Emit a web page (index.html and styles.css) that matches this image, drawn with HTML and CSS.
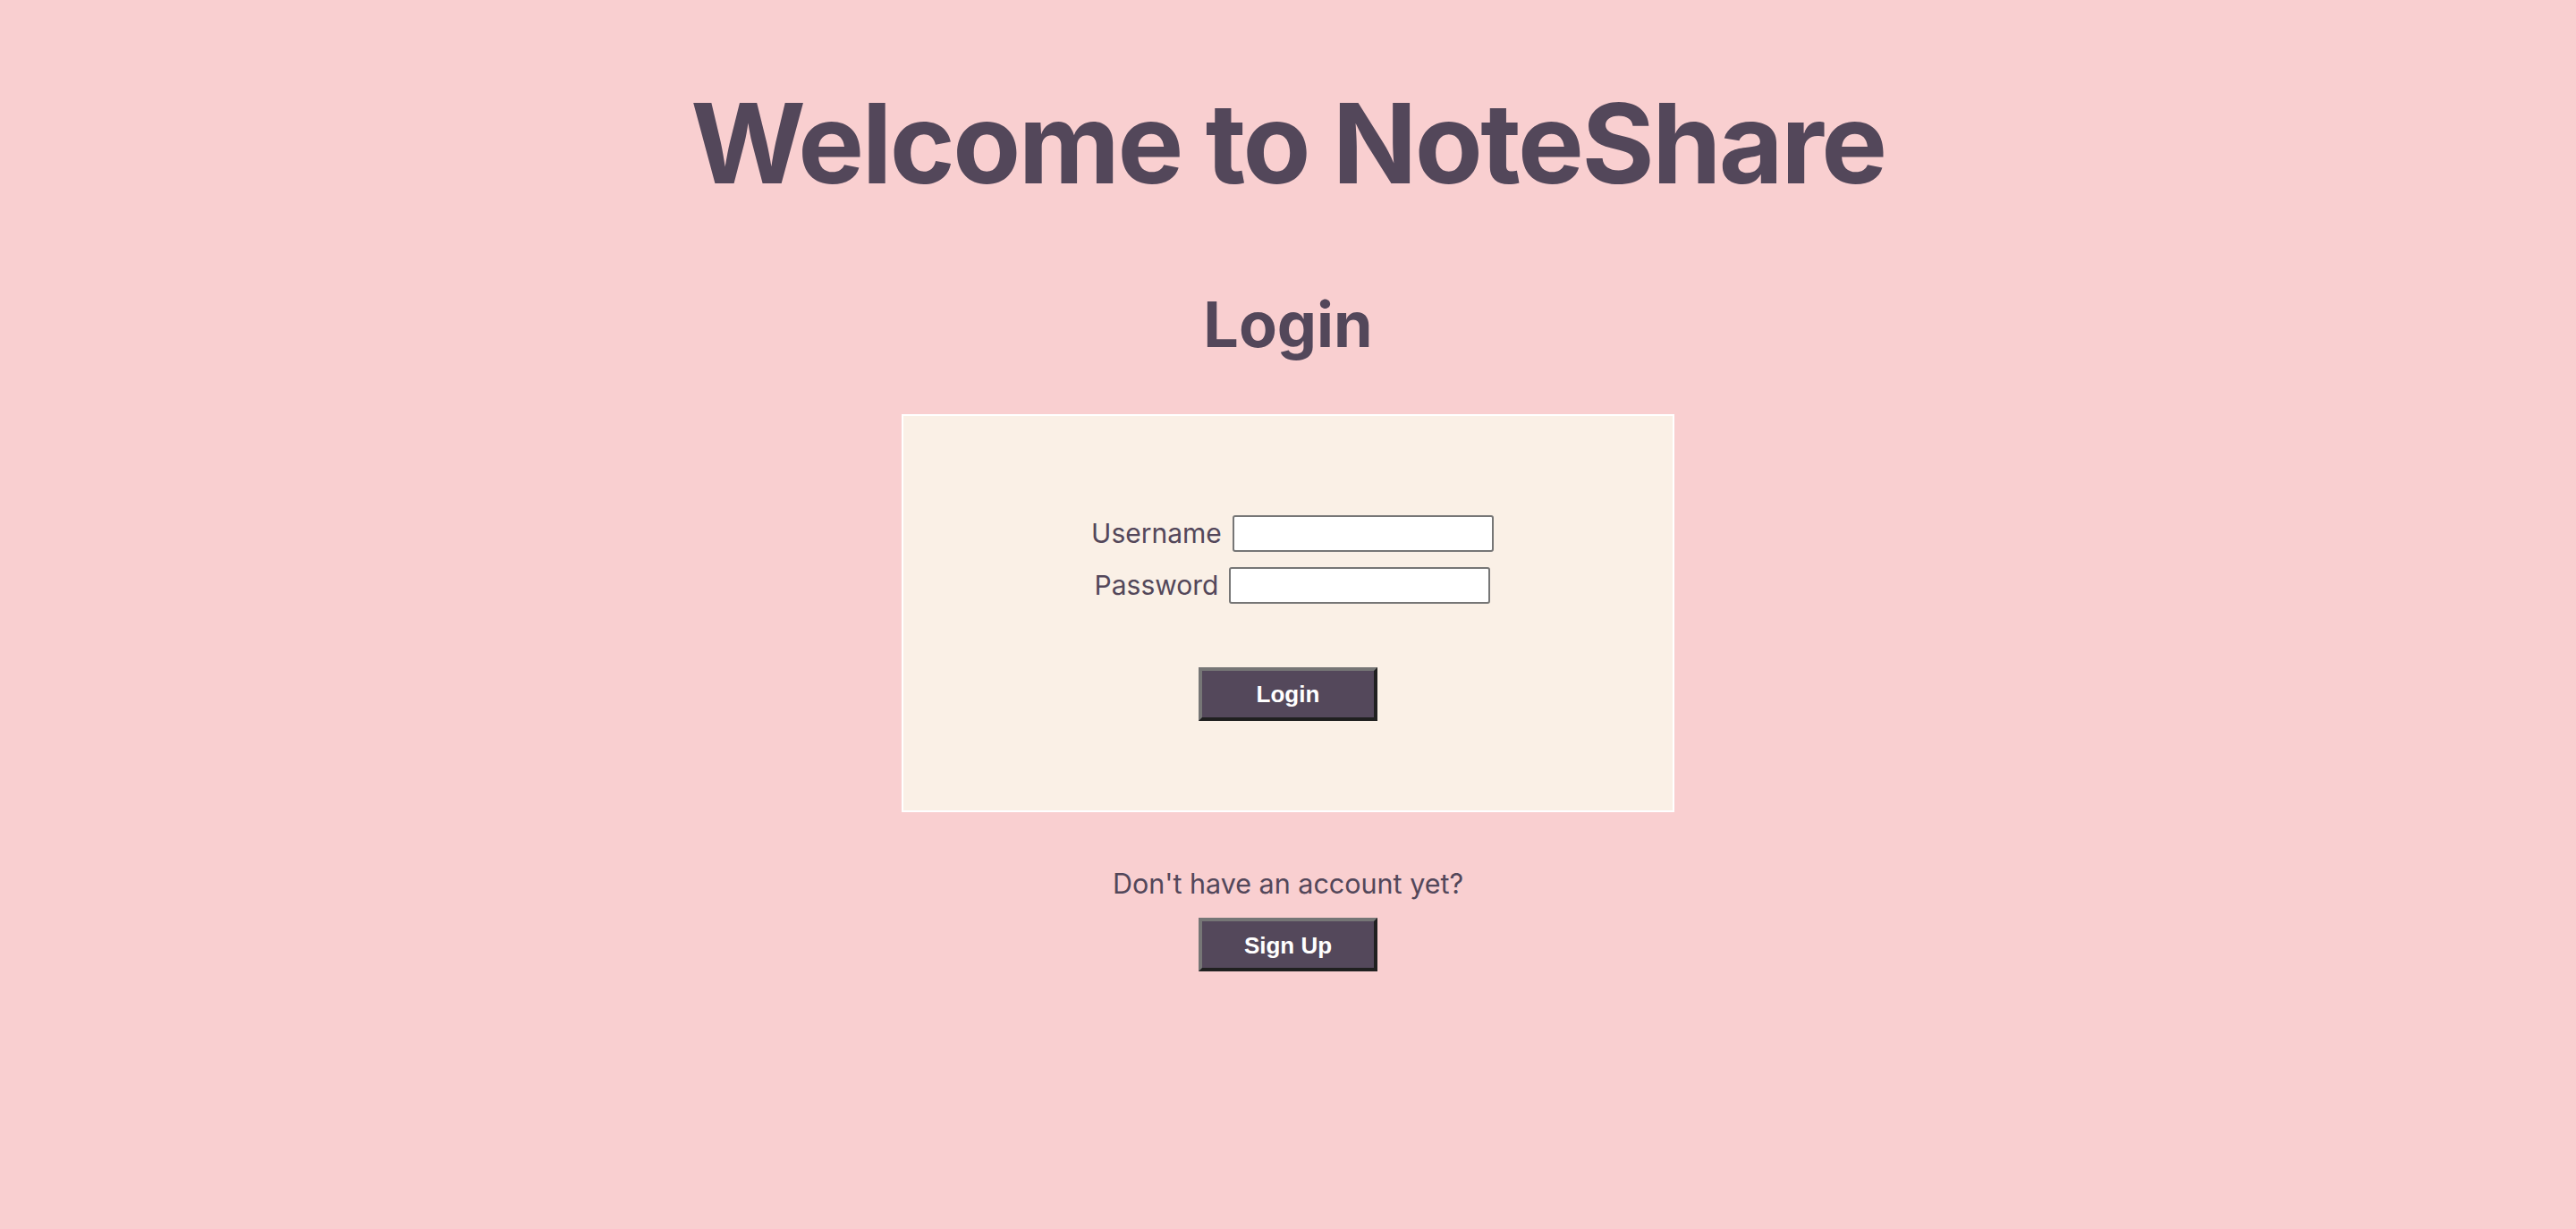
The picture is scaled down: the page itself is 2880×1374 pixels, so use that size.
FILE: index.html
```html
<!DOCTYPE html>
<html lang="en">
<head>
<meta charset="utf-8">
<title>NoteShare</title>
<link rel="stylesheet" href="styles.css">
</head>
<body>
<main class="page">
  <h1 class="title">Welcome to NoteShare</h1>
  <h2 class="subtitle">Login</h2>
  <form class="login-box">
    <div class="fields">
      <div class="field-row">
        <label class="field-label" for="username">Username</label>
        <input class="field-input" id="username" type="text">
      </div>
      <div class="field-row">
        <label class="field-label" for="password">Password</label>
        <input class="field-input" id="password" type="password">
      </div>
    </div>
    <button class="btn" type="button">Login</button>
  </form>
  <p class="signup-text">Don't have an account yet?</p>
  <button class="btn" type="button">Sign Up</button>
</main>
</body>
</html>
```
FILE: styles.css
```css
html, body {
  margin: 0;
  padding: 0;
}

body {
  background: #f9cfd0;
  color: #53475a;
  font-family: "Inter", "Noto Sans", sans-serif;
  min-height: 100vh;
}

.page {
  display: flex;
  flex-direction: column;
  align-items: center;
  padding-top: 86px;
}

.title {
  margin: 0;
  font-size: 124px;
  line-height: 1.2;
  font-weight: 700;
  letter-spacing: -2.5px;
}

.subtitle {
  margin: 86px 0 0;
  font-size: 70px;
  line-height: 1.2;
  font-weight: 700;
}

.login-box {
  box-sizing: border-box;
  width: 864px;
  margin-top: 58px;
  padding: 111px 0 100px;
  background: #faf0e6;
  border: 2px solid #ffffff;
  display: flex;
  flex-direction: column;
  align-items: center;
}

.fields {
  display: flex;
  flex-direction: column;
  align-items: center;
  gap: 17px;
  padding-left: 10px;
}

.field-row {
  display: flex;
  align-items: center;
  gap: 12px;
}

.field-label {
  font-size: 30px;
  line-height: 1;
}

.field-input {
  box-sizing: border-box;
  width: 292px;
  height: 41px;
  margin: 0;
  border: 2px solid #767676;
  border-radius: 3px;
  background: #ffffff;
  font-size: 22px;
  padding: 2px 6px;
}

.btn {
  box-sizing: border-box;
  width: 200px;
  height: 60px;
  margin: 0;
  margin-top: 71px;
  padding: 2px 0 0;
  background: #54485b;
  color: #ffffff;
  font-family: "Liberation Sans", Arial, sans-serif;
  font-weight: 700;
  font-size: 26px;
  border-style: solid;
  border-width: 4px;
  border-color: #767676 #202020 #202020 #767676;
  cursor: pointer;
}

.signup-text {
  margin: 62px 0 0;
  font-size: 30.5px;
  line-height: 1.2;
}

.signup-text + .btn {
  margin-top: 20px;
}
```
